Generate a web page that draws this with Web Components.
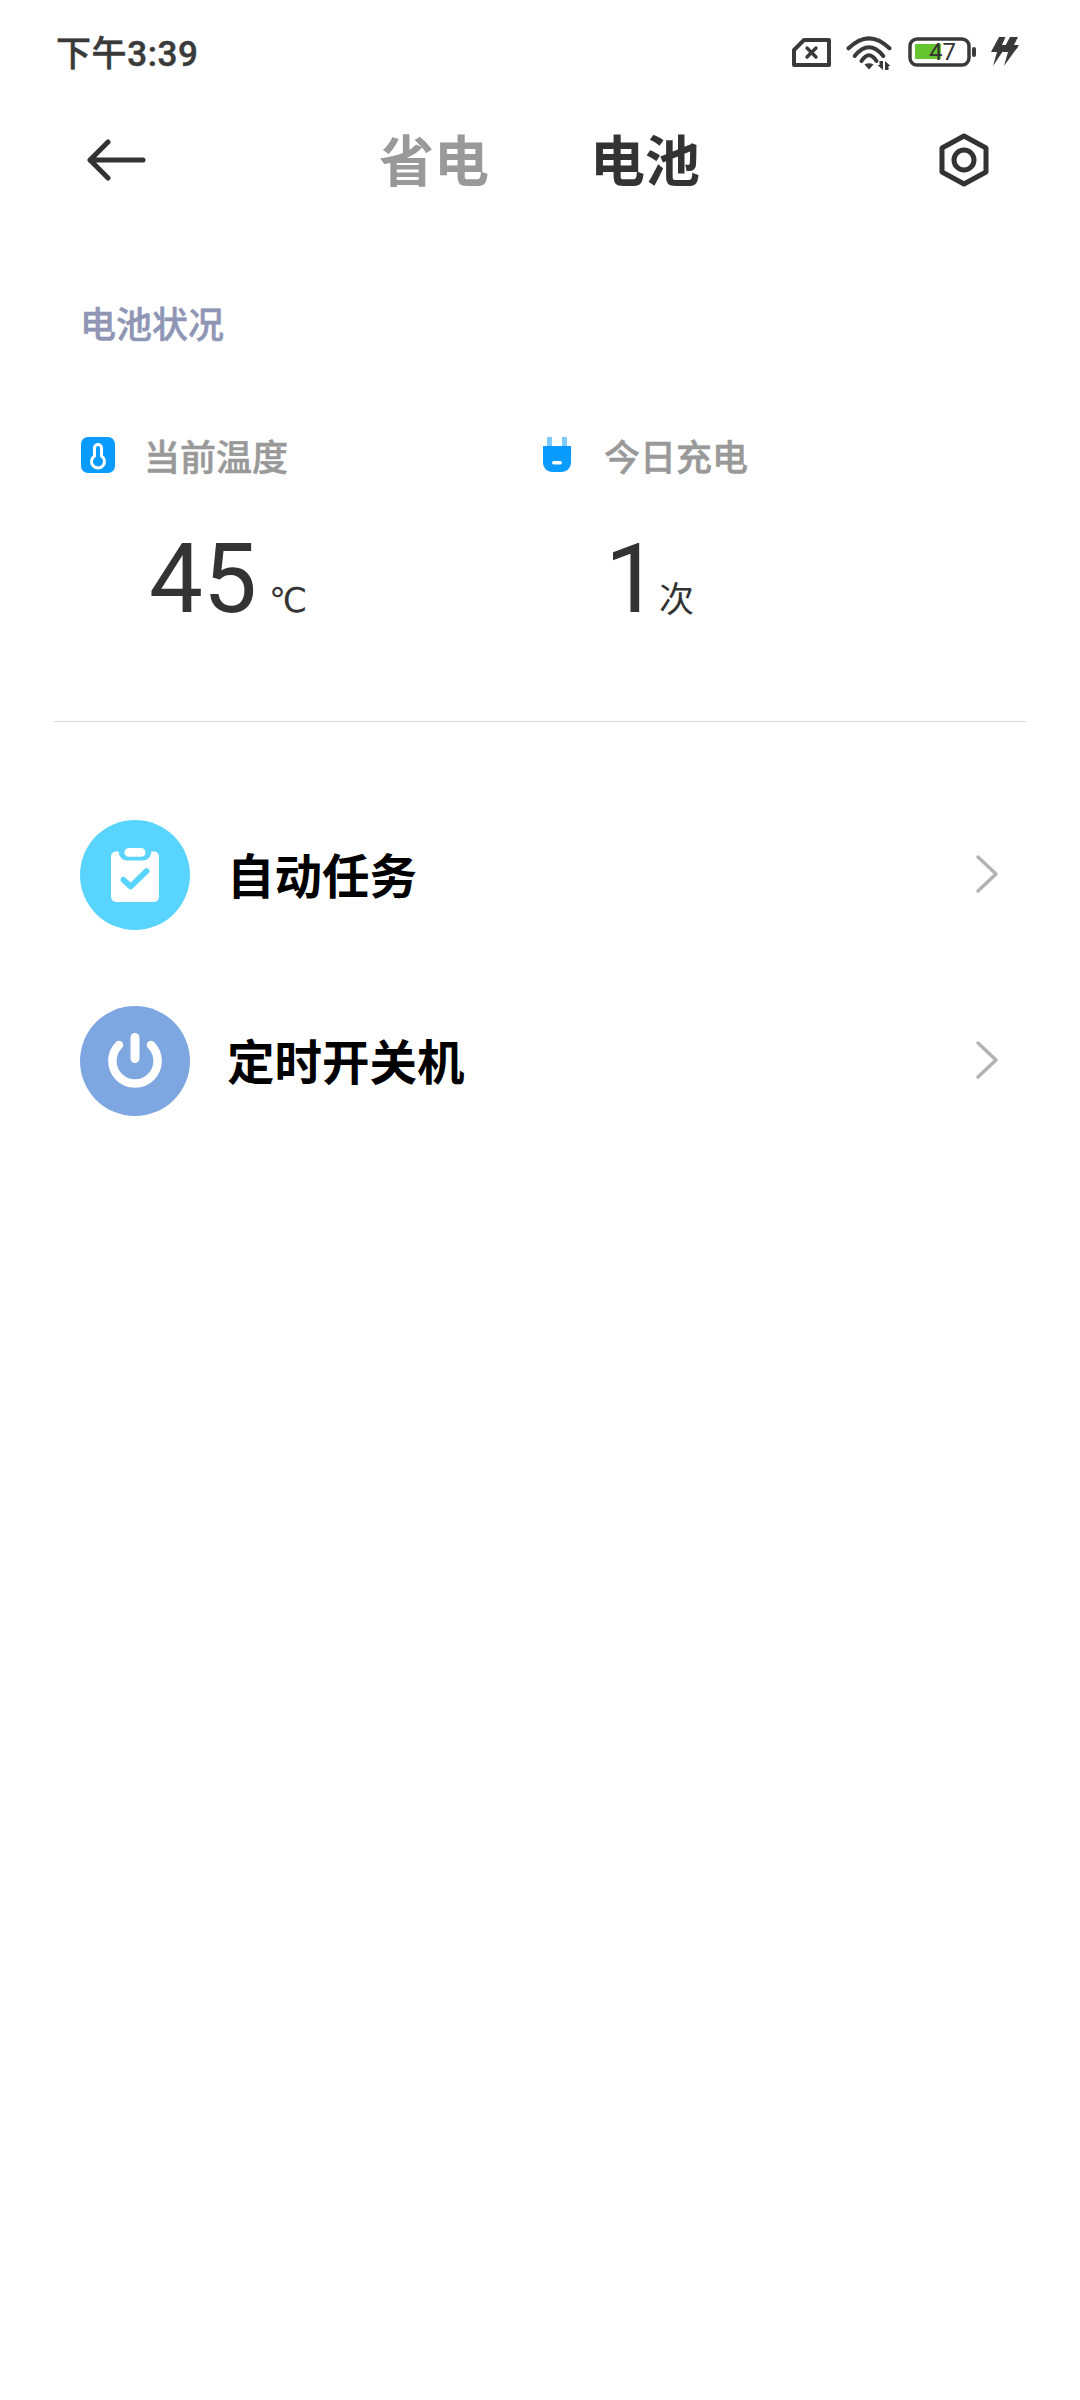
<!doctype html>
<html lang="zh">
<head>
<meta charset="utf-8">
<title>电池</title>
<style>
  html, body { margin: 0; background: #fff; }
  body { width: 1080px; height: 2400px; overflow: hidden; font-family: "Noto Sans CJK SC", Roboto, sans-serif; }
</style>
</head>
<body>
<battery-page></battery-page>
<script>
const CJK = '"Noto Sans CJK SC", sans-serif';

class statusBar extends HTMLElement {
  constructor() {
    super();
    this.shadow = this.attachShadow({ mode: 'open' });
    this.shadow.innerHTML = `
      <style>
        :host { display: flex; align-items: center; justify-content: space-between; height: 104px; padding: 0 61px 0 56px; color: #3a3a3a; }
        .time { font: 500 35px/44px Roboto, ${CJK}; letter-spacing: .6px; margin-top: 6px; -webkit-text-stroke: .5px #3a3a3a; }
        .icons { display: flex; align-items: center; }
        svg { display: block; }
        .wifi { margin-left: 14px; }
        .battery { position: relative; margin-left: 16px; width: 69px; height: 30px; }
        .level { position: absolute; left: 0; top: 0; width: 63px; height: 29px; text-align: center; font: 400 24px/30px Roboto, sans-serif; color: #333; padding-left: 6px; box-sizing: border-box; }
        .bolt { margin-left: 14px; }
      </style>
      <span class="time">下午3:39</span>
      <div class="icons">
        <svg width="41" height="31" viewBox="0 0 41 31" fill="none" stroke="#3a3a3a" stroke-width="4" stroke-linejoin="round" stroke-linecap="round">
          <path d="M13 3H38V28H3V13Z"/>
          <path d="M16 11l9 9M25 11l-9 9" stroke-width="3.4"/>
        </svg>
        <svg class="wifi" width="46" height="36" viewBox="0 0 46 36" fill="none" stroke="#3a3a3a" stroke-width="4" stroke-linecap="round">
          <path d="M2.500 14.300Q23 -5.700 43.500 14.300"/>
          <path d="M8.700 22Q23 4.600 37.300 22"/>
          <path d="M15.500 27Q23 15.500 30.500 27"/>
          <path d="M18.500 30.500Q23 28 27.500 30.500L23 35.500Z" fill="#3a3a3a" stroke="none"/>
          <path d="M33.500 27h3.500v9l-5.500-5h2ZM39 36v-9l5.500 5h-2V36Z" fill="#3a3a3a" stroke="none"/>
        </svg>
        <div class="battery">
          <svg width="69" height="30" viewBox="0 0 69 30" fill="none">
            <rect x="2" y="2" width="59" height="26" rx="7" stroke="#3a3a3a" stroke-width="3.500"/>
            <path d="M7 8a1 1 0 0 1 1-1H33V22H8a1 1 0 0 1-1-1Z" fill="#66c42e"/>
            <rect x="64" y="10" width="4" height="10" rx="2" fill="#3a3a3a"/>
          </svg>
          <span class="level">47</span>
        </div>
        <svg class="bolt" width="28" height="30" viewBox="0 0 28 30" fill="#3a3a3a">
          <path d="M8 0H14.500L11 8H16L2 29L6 15H0Z"/>
          <path d="M19 0H27L23 8H28L13 29L17 15H11Z"/>
          <path d="M3 10H27L24 13.500H1Z"/>
        </svg>
      </div>
    `;
  }
}

class topNav extends HTMLElement {
  constructor() {
    super();
    this.shadow = this.attachShadow({ mode: 'open' });
    this.shadow.innerHTML = `
      <style>
        :host { display: flex; align-items: center; justify-content: space-between; height: 112px; padding: 0 71px 0 87px; }
        svg { display: block; }
        .tabs { display: flex; gap: 101px; font: 700 55px/64px ${CJK}; margin: -6px 0 0 13px; }
        .off { color: #999; }
        .on { color: #333; }
      </style>
      <svg width="60" height="42" viewBox="0 0 60 42" fill="none" stroke="#333" stroke-width="5" stroke-linecap="round" stroke-linejoin="round">
        <path d="M21 3L3 21L21 39M3 21H56"/>
      </svg>
      <div class="tabs"><span class="off">省电</span><span class="on">电池</span></div>
      <svg width="90" height="64" viewBox="0 0 90 64" fill="none" stroke="#333" stroke-width="5" stroke-linejoin="round">
        <path d="M45 8L67 20V44L45 56L23 44V20Z"/>
        <circle cx="45" cy="32" r="10"/>
      </svg>
    `;
  }
}

class statItem extends HTMLElement {
  constructor() {
    super();
    this.shadow = this.attachShadow({ mode: 'open' });
    this.shadow.innerHTML = `
      <style>
        :host { display: block; }
        .head { display: flex; align-items: center; height: 44px; gap: var(--head-gap, 29px); font: 500 36px/44px ${CJK}; color: #999; -webkit-text-stroke: .5px #999; }
        .value { display: flex; align-items: baseline; gap: var(--unit-gap, 12px); margin: 52px 0 0 var(--value-left, 68px); color: #333; }
        .num { font: 400 96px/100px Roboto, sans-serif; }
        .unit { font: 400 35px/40px ${CJK}; }
      </style>
      <div class="head"><slot name="icon"></slot><slot name="label"></slot></div>
      <div class="value"><span class="num"><slot name="num"></slot></span><span class="unit"><slot name="unit"></slot></span></div>
    `;
  }
}

class listRow extends HTMLElement {
  constructor() {
    super();
    this.shadow = this.attachShadow({ mode: 'open' });
    this.shadow.innerHTML = `
      <style>
        :host { display: flex; align-items: center; height: 110px; padding: 0 81px 0 80px; }
        .badge { width: 110px; height: 110px; border-radius: 50%; background: var(--badge); display: flex; align-items: center; justify-content: center; }
        .title { flex: 1; margin: -3px 0 0 37px; font: 700 47.500px/60px ${CJK}; color: #000; }
        svg { display: block; }
        .chevron { margin-top: -3px; }
      </style>
      <div class="badge"><slot name="icon"></slot></div>
      <span class="title"><slot></slot></span>
      <svg class="chevron" width="24" height="40" viewBox="0 0 24 40" fill="none" stroke="#b3b3b3" stroke-width="3.500" stroke-linecap="round" stroke-linejoin="round">
        <path d="M3 3L21 20L3 37"/>
      </svg>
    `;
  }
}

class batteryPage extends HTMLElement {
  constructor() {
    super();
    this.shadow = this.attachShadow({ mode: 'open' });
    this.shadow.innerHTML = `
      <style>
        :host { display: block; width: 1080px; height: 2400px; background: #fff; }
        h2 { margin: 84px 0 0 80px; font: 500 36px/44px ${CJK}; color: #8f96b5; -webkit-text-stroke: .5px #8f96b5; }
        .stats { display: grid; grid-template-columns: 460px 1fr; padding: 0 0 0 81px; margin-top: 89px; }
        hr { margin: 92px 54px 0 54px; border: 0; height: 1px; background: #d8d8d8; }
        .rows { display: flex; flex-direction: column; gap: 76px; margin-top: 98px; }
        [slot="icon"] { display: block; }
        .unit-deg { font-family: "DejaVu Sans", sans-serif; font-size: 34px; }
      </style>
      <status-bar></status-bar>
      <top-nav></top-nav>
      <h2>电池状况</h2>
      <div class="stats">
        <stat-item>
          <svg slot="icon" width="34" height="36" viewBox="0 0 34 36">
            <rect width="34" height="36" rx="7" fill="#0a9bff"/>
            <path d="M17 7.500a3.500 3.500 0 0 1 3.500 3.500v8a6.500 6.500 0 1 1-7 0V11a3.500 3.500 0 0 1 3.500-3.500Z" fill="none" stroke="#fff" stroke-width="3"/>
          </svg>
          <span slot="label">当前温度</span>
          <span slot="num">45</span>
          <span slot="unit" class="unit-deg">℃</span>
        </stat-item>
        <stat-item style="--value-left:64px;--unit-gap:-1px;--head-gap:31px">
          <svg slot="icon" width="32" height="36" viewBox="0 0 32 36">
            <rect x="6" y="0" width="5" height="12" fill="#7fcbff"/>
            <rect x="21" y="0" width="5" height="12" fill="#7fcbff"/>
            <path d="M2 9h28v17a9 9 0 0 1-9 9H11a9 9 0 0 1-9-9Z" fill="#0a9bff"/>
            <rect x="11" y="24" width="10" height="3.500" rx="1.700" fill="#fff"/>
          </svg>
          <span slot="label">今日充电</span>
          <span slot="num">1</span>
          <span slot="unit">次</span>
        </stat-item>
      </div>
      <hr>
      <div class="rows">
        <list-row style="--badge:#59d4ff">
          <svg slot="icon" width="48" height="54" viewBox="0 0 50 56">
            <rect x="14" y="0" width="22" height="9" rx="4.500" fill="#fff"/>
            <path d="M8 3.500V4a9 9 0 0 0 9 9h16a9 9 0 0 0 9-9v-.500H45a5 5 0 0 1 5 5V51a5 5 0 0 1-5 5H5a5 5 0 0 1-5-5V8.500a5 5 0 0 1 5-5Z" fill="#fff"/>
            <path d="M13 33l7.500 7L37 24" fill="none" stroke="#59d4ff" stroke-width="6" stroke-linecap="round" stroke-linejoin="round"/>
          </svg>
          自动任务
        </list-row>
        <list-row style="--badge:#7ea6e0">
          <svg slot="icon" width="54" height="56" viewBox="0 0 54 56" fill="none" stroke="#fff" stroke-linecap="round">
            <path d="M11 12a22.600 22.600 0 1 0 32 0" stroke-width="8.500"/>
            <path d="M27 4.500V25.500" stroke-width="9"/>
          </svg>
          定时开关机
        </list-row>
      </div>
    `;
  }
}

customElements.define('status-bar', statusBar);
customElements.define('top-nav', topNav);
customElements.define('stat-item', statItem);
customElements.define('list-row', listRow);
customElements.define('battery-page', batteryPage);
</script>
</body>
</html>
